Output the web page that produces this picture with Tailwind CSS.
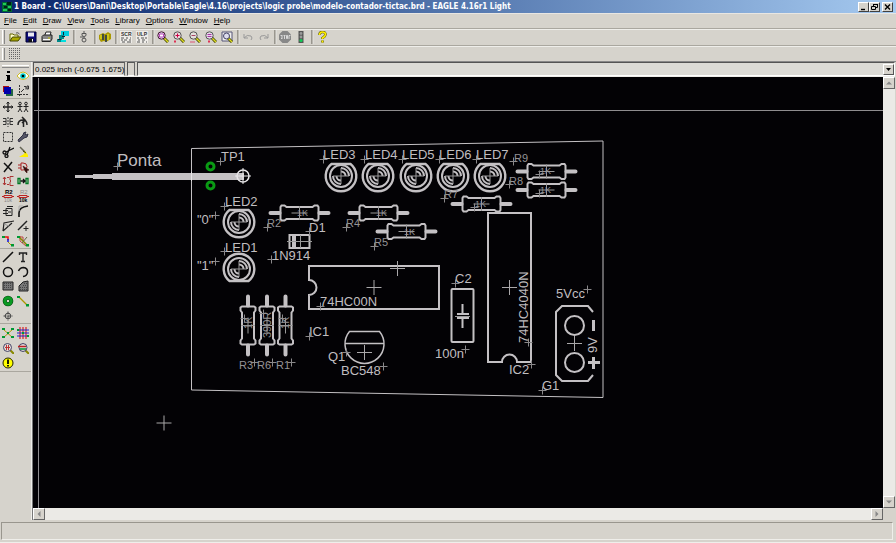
<!DOCTYPE html>
<html lang="en">
<head>
<meta charset="utf-8">
<meta name="viewport" content="width=device-width, initial-scale=1">
<title>1 Board - EAGLE 4.16r1 Light</title>
<script src="https://cdn.jsdelivr.net/npm/@tailwindcss/browser@4"></script>
</head>
<body class="h-screen flex flex-col overflow-hidden bg-[#d6d3cc] text-black text-[8px] leading-[10px] font-['Liberation_Sans',Arial,sans-serif]">

<header class="h-[13px] shrink-0 flex items-center gap-[2px] pl-0.5 pr-[3px] bg-linear-to-r from-[#0a246a] to-[#a6caf0]">
  <svg class="size-[10px] shrink-0" viewBox="0 0 10 10" shape-rendering="crispEdges"><path fill="#063" d="M0 0h10v10H0z"/><path fill="#2c5" d="M1 1h3v2H1zM6 4h3v2H6zM1 7h4v2H1z"/><path fill="#021" d="M5 0h4v3H5zM2 4h3v2H2zM6 7h3v2H6z"/></svg>
  <h1 class="grow truncate text-white font-bold text-[8px] leading-[13px] font-['DejaVu_Sans_Condensed','DejaVu_Sans',sans-serif]">1 Board - C:\Users\Dani\Desktop\Portable\Eagle\4.16\projects\logic probe\modelo-contador-tictac.brd - EAGLE 4.16r1 Light</h1>
  <div class="flex [&>button]:h-[10px] [&>button]:w-[11px] [&>button]:bg-[#d6d3cc] [&>button]:border [&>button]:border-t-white [&>button]:border-l-white [&>button]:border-b-[#404040] [&>button]:border-r-[#404040]">
    <button aria-label="Minimize"><svg class="size-full" viewBox="0 0 9 8"><path d="M2 6.500h4" stroke="#000" stroke-width="1.400"/></svg></button>
    <button aria-label="Restore"><svg class="size-full" viewBox="0 0 9 8" fill="none" stroke="#000"><path d="M3.500 3V1.500h4v3H6M3 1.500h5M1.500 3.500h4v3h-4z"/></svg></button>
    <button aria-label="Close" class="ml-[2px]"><svg class="size-full" viewBox="0 0 9 8"><path d="M2 1.500l5 5M7 1.500l-5 5" stroke="#000" stroke-width="1.400"/></svg></button>
  </div>
</header>

<nav class="h-[15px] shrink-0 flex items-center gap-[6px] pl-1 border-t border-[#e8e6e2]">
  <button><u>F</u>ile</button><button><u>E</u>dit</button><button><u>D</u>raw</button><button><u>V</u>iew</button><button><u>T</u>ools</button><button><u>L</u>ibrary</button><button><u>O</u>ptions</button><button><u>W</u>indow</button><button><u>H</u>elp</button>
</nav>

<div role="toolbar" aria-label="Actions" class="h-[17px] shrink-0 flex items-center border-t border-[#aaa79f] shadow-[inset_0_1px_0_#efeeea] [&>button]:w-4 [&>button]:h-4 [&>button]:flex [&>button]:items-center [&>button]:justify-center [&_svg]:size-3 [&>i]:w-[5px] [&>i]:h-[14px] [&>i]:shrink-0 [&>i]:bg-linear-to-r [&>i]:from-transparent [&>i]:from-40% [&>i]:via-[#99968e] [&>i]:via-50% [&>i]:to-[#efeeea]">
  <span class="ml-[2px] mr-[2px] w-[3px] h-[14px] border-l border-r border-l-white border-r-[#888]"></span>
  <button aria-label="Open"><svg viewBox="0 0 12 12"><path d="M1 10V3h3l1 1h4v2" fill="#ffc" stroke="#660"/><path d="M1 10l2.500-4H12l-3 4z" fill="#aa0" stroke="#440"/><path d="M7 2q2-1 3.500 1" fill="none" stroke="#333" stroke-width=".8"/></svg></button>
  <button aria-label="Save"><svg viewBox="0 0 12 12"><path d="M1 1h10v10H1z" fill="#0a0a7a" stroke="#003"/><path d="M3 1.500h6v4H3z" fill="#e8e8f0"/><path d="M3.500 7.500h5V11h-5z" fill="#111"/><path d="M7 8h1v2.500H7z" fill="#fff"/></svg></button>
  <button aria-label="Print"><svg viewBox="0 0 12 12"><path d="M3.500 5l1.500-4h5L9 5z" fill="#fff" stroke="#222"/><path d="M1 5.500L2.500 4H11v4L9.500 10.500H1z" fill="#888" stroke="#222"/><path d="M2 8.500h7" stroke="#fff"/><path d="M7 7h2" stroke="#cc0"/></svg></button>
  <button aria-label="CAM"><svg viewBox="0 0 12 12"><path d="M4 0h8v5H4z" fill="#0cd"/><path d="M2 4h5v4H5v3H0V8h2z" fill="#088"/><path d="M5 5h3v1H5zM1 8h3v1H1zM6 1h1v3H6z" fill="#123"/><path d="M4 9h5v2H4z" fill="#0dd"/></svg></button>
  <i></i>
  <button aria-label="Switch to schematic"><svg viewBox="0 0 12 12" fill="none" stroke="#555"><path d="M6 0v2M4 4V2.500h4V4q0 1.500-2 1.500T4 4zM2 6h3M6 6v2"/><circle cx="6" cy="9" r="2"/></svg></button>
  <i></i>
  <button aria-label="Library use"><svg viewBox="0 0 12 12"><path d="M0 4l4-2 2 1 3-2 3 2v5l-5 3-2-1-3 1-2-3z" fill="#a90"/><path d="M4 3v6M7 4v7" stroke="#235" stroke-width="1.500"/><path d="M2 4v4M9 3v6" stroke="#ee3"/></svg></button>
  <i></i>
  <button aria-label="Script"><svg viewBox="0 0 12 12"><path d="M0 0h12v12H0z" fill="#eeece8"/><text x="1" y="5" font-size="5" font-weight="bold" fill="#333">SCR</text><path d="M1 7h3M6 7h2M10 7h1M1 9h2M4 9h3M9 9h2M2 11h3M7 11h4" stroke="#555"/></svg></button>
  <button aria-label="ULP"><svg viewBox="0 0 12 12"><path d="M0 0h12v12H0z" fill="#eeece8"/><text x="1" y="5" font-size="5" font-weight="bold" fill="#333">ULP</text><path d="M1 7h2M5 7h3M9 7h2M2 9h2M6 9h3M1 11h3M6 11h2M10 11h1" stroke="#555"/></svg></button>
  <i></i>
  <button aria-label="Zoom fit"><svg viewBox="0 0 12 12"><path d="M7 7l4 4" stroke="#440" stroke-width="3"/><path d="M7 7l4 4" stroke="#dd2" stroke-width="1.500"/><circle cx="4.500" cy="4.500" r="3.700" fill="#dcd8e8" stroke="#413"/><path d="M2.500 3h4v3h-4z" fill="#fff" stroke="#b4b"/></svg></button>
  <button aria-label="Zoom in"><svg viewBox="0 0 12 12"><path d="M7 7l4 4" stroke="#440" stroke-width="3"/><path d="M7 7l4 4" stroke="#dd2" stroke-width="1.500"/><circle cx="4.500" cy="4.500" r="3.700" fill="#e8d8dc" stroke="#555"/><path d="M2.500 4.500h4M4.500 2.500v4" stroke="#c04"/><path d="M1 10.500h2" stroke="#d35" stroke-width="2"/></svg></button>
  <button aria-label="Zoom out"><svg viewBox="0 0 12 12"><path d="M7 7l4 4" stroke="#440" stroke-width="3"/><path d="M7 7l4 4" stroke="#dd2" stroke-width="1.500"/><circle cx="4.500" cy="4.500" r="3.700" fill="#e4e0dc" stroke="#555"/><path d="M2.500 4.500h4" stroke="#a46"/><path d="M1 11h5" stroke="#d57"/></svg></button>
  <button aria-label="Redraw"><svg viewBox="0 0 12 12"><path d="M7 7l4 4" stroke="#440" stroke-width="3"/><path d="M7 7l4 4" stroke="#dd2" stroke-width="1.500"/><circle cx="4.500" cy="4.500" r="3.700" fill="#e4dce8" stroke="#555"/><path d="M2.500 3.500h4M2.500 5.500h4" stroke="#a3a"/><path d="M3 10.500h2" stroke="#d35" stroke-width="2"/></svg></button>
  <button aria-label="Zoom select"><svg viewBox="0 0 12 12"><path d="M1 1h10v9H1z" fill="#eee" stroke="#557"/><path d="M7 7l4 4" stroke="#440" stroke-width="3"/><path d="M7 7l4 4" stroke="#dd2" stroke-width="1.500"/><circle cx="5.500" cy="5" r="3" fill="#dde" stroke="#446"/></svg></button>
  <i></i>
  <button aria-label="Undo"><svg viewBox="0 0 12 12" fill="none" stroke="#999"><path d="M2 3v4h4M2 7q3-4 7-2 2 2 0 4"/></svg></button>
  <button aria-label="Redo"><svg viewBox="0 0 12 12" fill="none" stroke="#999"><path d="M10 3v4H6M10 7Q7 3 3 5q-2 2 0 4"/></svg></button>
  <i></i>
  <button aria-label="Stop"><svg viewBox="0 0 12 12"><path d="M3.500 0h5L12 3.500v5L8.500 12h-5L0 8.500v-5z" fill="#888"/><path d="M1.500 4.500h2M2 7.500h1.500M3 5v2M4.500 4.500h2M5.500 5v3M7.500 4.500v3h1v-3zM10 8V4.500h1.500" stroke="#eee" stroke-width=".8" fill="none"/></svg></button>
  <button aria-label="Go"><svg viewBox="0 0 12 12"><path d="M3.500 0h5v12h-5z" fill="#555"/><circle cx="6" cy="2.500" r="1.400" fill="#999"/><circle cx="6" cy="6" r="1.400" fill="#999"/><circle cx="6" cy="9.500" r="1.600" fill="#1c5"/></svg></button>
  <i></i>
  <button aria-label="Help"><svg viewBox="0 0 12 12" fill="none"><path d="M3.500 4q0-3 3-3t3 2.500Q9.500 5 6.500 7v1M6.500 9.500v2" stroke="#550" stroke-width="2.600"/><path d="M3.500 4q0-3 3-3t3 2.500Q9.500 5 6.500 7v1M6.500 9.500v2" stroke="#fe0" stroke-width="1.600"/></svg></button>
</div>

<div role="toolbar" aria-label="Parameters" class="h-4 shrink-0 flex items-center border-t border-[#aaa79f] shadow-[inset_0_1px_0_#efeeea]">
  <span class="ml-[2px] mr-[4px] w-[3px] h-[12px] border-l border-r border-l-white border-r-[#888]"></span>
  <button aria-label="Grid"><svg class="size-[11px]" viewBox="0 0 11 11"><path d="M.5 0v11M2.500 0v11M4.500 0v11M6.500 0v11M8.500 0v11M10.500 0v11" stroke="#666" stroke-dasharray="1 1"/></svg></button>
</div>

<div class="flex grow min-h-0 border-t border-[#888]">
  <aside aria-label="Commands" class="w-[32px] shrink-0 flex flex-col pt-[3px] border-r border-[#efeeea] [&>div]:grid [&>div]:grid-cols-2 [&>div]:shrink-0 [&>div]:mb-px [&>div]:border-b [&>div]:border-[#aaa79f] [&_button]:flex [&_button]:items-center [&_button]:justify-center [&_button]:min-h-0 [&_svg]:size-3">
    <span class="mx-[2px] h-[3px] shrink-0 border-t border-b border-t-white border-b-[#888]"></span>
    <div class="h-[31px] grid-rows-2">
      <button aria-label="Info"><svg viewBox="0 0 12 12"><path d="M5 1h3v2H5zM4 5h4v5h1v1H4v-1h1V6H4z"/></svg></button>
      <button aria-label="Show"><svg viewBox="0 0 12 12"><path d="M0 6q6-8 12 0-6 7-12 0z" fill="#fff" stroke="#cb2"/><circle cx="6" cy="6" r="2.800" fill="#0cc"/><circle cx="6" cy="6" r="1.300"/></svg></button>
      <button aria-label="Display layers"><svg viewBox="0 0 12 12"><path d="M1 1h6v6H1z" fill="#a11"/><path d="M4 4h7v7H4z" fill="#264"/><path d="M2 2h7v7H2z" fill="#00a"/></svg></button>
      <button aria-label="Mark"><svg viewBox="0 0 12 12" fill="none" stroke="#333"><path d="M2.500 0v12M0 9.500h12" stroke-dasharray="2 1"/><path d="M4 7l3-3M7 1.500h2v3M10 1h1.500v3H10z"/></svg></button>
    </div>
    <div class="h-[149px] grid-rows-10">
      <button aria-label="Move"><svg viewBox="0 0 12 12" fill="none" stroke="#222"><path d="M6 1v10M1 6h10" stroke-width="1.300"/><path d="M4.500 2.500L6 1l1.500 1.500M4.500 9.500L6 11l1.500-1.500M2.500 4.500L1 6l1.500 1.500M9.500 4.500L11 6 9.500 7.500"/></svg></button>
      <button aria-label="Copy"><svg viewBox="0 0 12 12" fill="none" stroke="#222"><circle cx="3" cy="2.500" r="1.300"/><circle cx="9" cy="2.500" r="1.300"/><path d="M.5 5.500h5M6.500 5.500h5M3 4v4M9 4v4M1 11l2-3 2 3M7 11l2-3 2 3"/></svg></button>
      <button aria-label="Mirror"><svg viewBox="0 0 12 12" fill="none" stroke="#333"><path d="M6 1v10" stroke-dasharray="2 1"/><path d="M1 2.500h3v6H1M1 5.500h3M11 2.500H8v6h3M8 5.500h3"/></svg></button>
      <button aria-label="Rotate"><svg viewBox="0 0 12 12" fill="none" stroke="#222" stroke-width="1.500"><path d="M6.500 4v7M1 9q0-5 5-5 4 0 4 5M5 1l3 3-3 3"/></svg></button>
      <button aria-label="Group"><svg viewBox="0 0 12 12"><path d="M1.500 1.500h9v9h-9z" fill="none" stroke="#333" stroke-dasharray="2 1"/></svg></button>
      <button aria-label="Change"><svg viewBox="0 0 12 12"><path d="M1 9l5-5q0-3 3-3L8 3l1 1 2-1q0 4-4 4l-5 4z" fill="#556" stroke="#334"/></svg></button>
      <button aria-label="Cut"><svg viewBox="0 0 12 12" fill="none" stroke="#111" stroke-width="1.300"><path d="M12 2L4 6M8 1L5 9"/><circle cx="2.500" cy="6.500" r="1.500"/><circle cx="4.500" cy="10" r="1.500"/></svg></button>
      <button aria-label="Paste"><svg viewBox="0 0 12 12"><path d="M3 1l5 5" stroke="#665" stroke-width="1.500"/><path d="M8 5l3 4v2H2l5-3z" fill="#fe0"/><path d="M6 5l3 2" stroke="#440"/></svg></button>
      <button aria-label="Delete"><svg viewBox="0 0 12 12"><path d="M2 2l8 8M10 1L2 11" stroke="#111" stroke-width="1.500"/></svg></button>
      <button aria-label="Add"><svg viewBox="0 0 12 12" fill="none" stroke="#a22"><path d="M1 4h3M1 7h3M4 2v7h2q4 0 4-3.500T6 2z"/><path d="M6 5l6 4-2 .5V12L8 10z" fill="#311" stroke="#411" stroke-width=".6"/></svg></button>
      <button aria-label="Pinswap"><svg viewBox="0 0 12 12" fill="none" stroke="#a33"><path d="M2.500 2v8M1 4l1.500-2L4 4M1 8l1.500 2L4 8"/><path d="M5 2.500h2M5 9.500h2M11.500 1.500H8v3.500q2 1 0 2v3.500h3.500"/></svg></button>
      <button aria-label="Replace"><svg viewBox="0 0 12 12" fill="none" stroke="#072" stroke-width="1.300"><path d="M1 3.500h2v5H1zM9 3.500h2v5H9z"/><path d="M3.500 6h5M6 4l2 2-2 2" stroke="#111"/></svg></button>
      <button aria-label="Name"><svg viewBox="0 0 12 12"><text x="3" y="4" font-size="6" font-weight="bold">R2</text><path d="M0 6.500h2M10 6.500h2M2 5.500h8v2H2z" fill="none" stroke="#b22"/><text x="2" y="12" font-size="5" fill="#888">10k</text></svg></button>
      <button aria-label="Value"><svg viewBox="0 0 12 12"><text x="3" y="4" font-size="6" fill="#888">R2</text><path d="M0 6.500h2M10 6.500h2M2 5.500h8v2H2z" fill="none" stroke="#b22"/><text x="2" y="12" font-size="5" font-weight="bold">10k</text></svg></button>
      <button aria-label="Smash"><svg viewBox="0 0 12 12" fill="none" stroke="#222"><path d="M4 3.500h6v7H4zM5 1.500h6M1 5.500h5M1 8.500h5M6 7h3"/></svg></button>
      <button aria-label="Miter"><svg viewBox="0 0 12 12" fill="none"><path d="M2 12V8q0-6 9-7" stroke="#111" stroke-width="1.600"/><path d="M2 6V1h4" stroke="#aaa"/></svg></button>
      <button aria-label="Split"><svg viewBox="0 0 12 12" fill="none" stroke="#222"><path d="M1 11L2 3 12 1M1 11L10 3" stroke-width="1.200"/><path d="M2 4l5 2" stroke="#999"/></svg></button>
      <button aria-label="Optimize"><svg viewBox="0 0 12 12" fill="none" stroke="#222"><path d="M1 10l9-9" stroke-width="1.500"/><path d="M6.500 8.500h5M9 6v5"/></svg></button>
      <button aria-label="Route"><svg viewBox="0 0 12 12" fill="none"><path d="M2 2h4v3" stroke="#e11" stroke-width="1.500"/><path d="M6 4v3" stroke="#11d" stroke-width="1.500"/><path d="M6 7l4 4" stroke="#a90"/><path d="M0 1h3v2H0zM9 9h3v2.500H9z" fill="#093"/></svg></button>
      <button aria-label="Ripup"><svg viewBox="0 0 12 12" fill="none"><path d="M1 2h5v4M3 1v5l6 5" stroke="#b44"/><path d="M2 2l8 8" stroke="#880" stroke-width="1.600"/><path d="M5 8l5-6" stroke="#664"/><path d="M0 1h3v2H0zM9 9h3v2.500H9z" fill="#093"/></svg></button>
    </div>
    <div class="h-[74px] grid-rows-5">
      <button aria-label="Wire"><svg viewBox="0 0 12 12"><path d="M1 11L11 1" stroke="#111" stroke-width="1.500"/></svg></button>
      <button aria-label="Text"><svg viewBox="0 0 12 12"><path d="M2.500 4V2h7v2M6 2v8.500M4 10.500h4" fill="none" stroke="#222" stroke-width="1.400"/></svg></button>
      <button aria-label="Circle"><svg viewBox="0 0 12 12"><circle cx="6" cy="6" r="4.500" fill="none" stroke="#111" stroke-width="1.500"/></svg></button>
      <button aria-label="Arc"><svg viewBox="0 0 12 12"><path d="M1.500 5Q3 1.500 6.500 1.500 11 2 10.500 6.500 10 10 6 10.500" fill="none" stroke="#111" stroke-width="1.500"/></svg></button>
      <button aria-label="Rectangle"><svg viewBox="0 0 12 12"><path d="M1 2h10v8H1z" fill="#777" stroke="#222"/><path d="M2 3.500h8M2 5.500h8M2 7.500h8" stroke="#444" stroke-dasharray="1 1"/></svg></button>
      <button aria-label="Polygon"><svg viewBox="0 0 12 12"><path d="M2 11V6l4-4 5-1v10z" fill="#777" stroke="#222"/><path d="M3 7.500h7M3 9.500h7M6 5.500h4M7 3.500h3" stroke="#444" stroke-dasharray="1 1"/></svg></button>
      <button aria-label="Via"><svg viewBox="0 0 12 12"><circle cx="6" cy="6" r="3.300" fill="#d6d3cc" stroke="#093d12" stroke-width="4"/><circle cx="6" cy="6" r="3.300" fill="none" stroke="#0a9a22" stroke-width="3"/></svg></button>
      <button aria-label="Signal"><svg viewBox="0 0 12 12"><path d="M2 2l8 8" stroke="#a90" stroke-width="1.300"/><path d="M0 1h3v2H0zM9 9h3v2.500H9z" fill="#093"/></svg></button>
      <button aria-label="Hole"><svg viewBox="0 0 12 12" fill="none" stroke="#444"><circle cx="6" cy="6" r="2.800"/><path d="M6 1.500v9M1.500 6h9" stroke-dasharray="3 1"/></svg></button>
    </div>
    <div class="h-[47px] grid-rows-3">
      <button aria-label="Ratsnest"><svg viewBox="0 0 12 12"><path d="M1 2l10 9M11 2L1 11" stroke="#a90"/><path d="M0 1h3v2H0zM9 1h3v2H9zM0 9h3v2H0zM9 9h3v2H9zM5 5h2v2H5z" fill="#093"/></svg></button>
      <button aria-label="Auto"><svg viewBox="0 0 12 12"><path d="M3 0v12M6 0v12M9 0v12" stroke="#d22" stroke-width="1.200"/><path d="M0 3h12M0 6h12M0 9h12" stroke="#22c" stroke-width="1.200"/><path d="M0 2h2v2H0zM5 5h2v2H5zM10 8h2v2h-2z" fill="#093"/></svg></button>
      <button aria-label="ERC"><svg viewBox="0 0 12 12"><path d="M8 8l4 4" stroke="#880" stroke-width="2"/><circle cx="5.500" cy="5.500" r="4" fill="#e4dcdc" stroke="#446"/><path d="M3 5.500h5M4.500 3v5M6.500 3v5" stroke="#b33"/></svg></button>
      <button aria-label="DRC"><svg viewBox="0 0 12 12"><path d="M8 8l4 4" stroke="#880" stroke-width="2"/><circle cx="6" cy="5.500" r="4" fill="#e4dcdc" stroke="#446"/><path d="M1 4.500h8" stroke="#b22" stroke-width="1.500"/><path d="M3 7h6" stroke="#093" stroke-width="1.500"/></svg></button>
      <button aria-label="Errors"><svg viewBox="0 0 12 12"><circle cx="6" cy="6" r="5" fill="#ff0" stroke="#220"/><path d="M6 2.500v4.500M6 8v1.500" stroke="#000" stroke-width="1.800"/></svg></button>
    </div>
  </aside>

  <main class="grow min-w-0 flex flex-col pr-px">
    <div class="h-[15px] shrink-0 flex gap-[2px] pl-px border-b border-[#efeeea]">
      <output class="w-[92px] pl-px leading-[13px] whitespace-nowrap border border-t-[#555] border-l-[#555] border-b-white border-r-[#666]">0.025 inch (-0.675 1.675)</output>
      <span class="w-[8px] border border-t-[#555] border-l-[#555] border-b-white border-r-[#666]"></span>
      <div class="grow flex items-center border border-t-[#555] border-l-[#555] border-b-white border-r-white bg-[#dcdbd6]">
        <input aria-label="Command line" class="grow h-full px-1 bg-transparent outline-none">
        <button aria-label="Command history" class="w-[11px] h-[11px] bg-[#d6d3cc] border border-t-white border-l-white border-b-[#555] border-r-[#555]"><svg class="size-full" viewBox="0 0 9 9"><path d="M2 3h5L4.500 6z"/></svg></button>
      </div>
    </div>

    <div class="grow min-h-0 grid grid-cols-[1fr_12px] grid-rows-[1fr_12px] border-l border-[#777]">
      <svg role="img" aria-label="Board layout" class="block w-full h-full bg-[#030205] font-['Liberation_Sans',Arial,sans-serif]">
        <defs>
          <g id="led"><path d="M-9.500-12H9.500A15.300 15.300 0 1 1-9.500-12z" stroke-width="2.400"/><use href="#lens"/></g>
          <g id="lens"><circle r="11" stroke-width="2"/><path d="M0-8A8 8 0 0 1 8 0M0-4.500A4.500 4.500 0 0 1 4.500 0M0 8A8 8 0 0 1-8 0M0 4.500A4.500 4.500 0 0 1-4.500 0" stroke-width="2"/><path d="M-8 0H8M0-8V8" stroke="#9a989a" stroke-width="1"/></g>
          <g id="res"><path d="M-29 0h9M20 0h9" stroke-width="4" stroke-linecap="round"/><path d="M-18-7.500h3l2 1.500h26l2-1.500h3l1 1.500V6l-1 1.500h-3L13 6h-26l-2 1.500h-3L-19 6V-6z" stroke-width="2"/><path d="M0-7V7M-8 0H8" stroke="#999"/></g>
          <path id="x" d="M-4 0H4M0-4V4" stroke="#8a888a"/>
          <path id="o" d="M-7.500 0H7.500M0-7.500V7.500" stroke="#aaa8aa"/>
        </defs>
        <g transform="translate(-33 -77)" fill="none" stroke="#c4c1c4">
          <path d="M34 110.500H2000M38.500 78V2000" stroke="#8f8d8f"/>
          <path d="M191.500 148.500L603 141V397.500L191.500 390z"/>
          <path d="M75 176.500h20" stroke-width="3"/><path d="M93 176.500h20" stroke-width="5"/><path d="M112 176.500h132" stroke-width="7"/>
          <g stroke="#e8e6e8"><circle cx="243" cy="176" r="6" stroke-width="1.500"/><path d="M235 176h16M243 168v16M191.500 172v9"/></g>
          <g stroke="#0a9a14" stroke-width="3"><circle cx="210.500" cy="166.500" r="3.500"/><circle cx="210.500" cy="185.500" r="3.500"/></g>

          <use href="#led" x="341" y="176"/><use href="#led" x="378" y="176"/><use href="#led" x="416" y="176"/><use href="#led" x="453" y="176"/><use href="#led" x="490" y="176"/><use href="#led" x="239" y="222"/>
          <path d="M229.500 281H248.500A15.300 15.300 0 1 0 229.500 281z" stroke-width="2.400"/><use href="#lens" x="239" y="269"/>

          <use href="#res" x="299.500" y="213"/><use href="#res" x="378.500" y="213"/><use href="#res" x="406.500" y="231.500"/><use href="#res" x="481.500" y="204"/><use href="#res" x="546.500" y="171.500"/><use href="#res" x="546.500" y="190"/>
          <use href="#res" transform="translate(248 325.500) rotate(90)"/><use href="#res" transform="translate(267 325.500) rotate(90)"/><use href="#res" transform="translate(285.500 325.500) rotate(90)"/>

          <g stroke-width="2">
            <path d="M309 266H439V309H309V295A7.500 7.500 0 0 0 309 280z"/>
            <path d="M488 213H531V362H517A7.500 7.500 0 0 0 502 362H488z"/>
            <rect x="451.500" y="289" width="22" height="53" rx="1"/>
            <path d="M457 314h12M457 318h12M462.500 304v10M462.500 318v10"/>
            <path d="M593 312l-5-6h-26l-6 6v63l6 6h26l5-6"/>
            <circle cx="574.500" cy="325.500" r="9.500"/><circle cx="574.500" cy="362.500" r="9.500"/>
            <path d="M593.500 320v11M588 362.500h12M593.500 357v12" stroke-width="3"/>
            <path d="M289.500 235h20v13h-20z"/><path d="M294 235v13" stroke-width="4"/>
            <path d="M349.500 331.500h30A19.500 19.500 0 1 1 349.500 331.500z" stroke-width="1.500"/><path d="M345 343.500h39" stroke-width="1.500"/>
          </g>
          <path d="M300.500 235v13M287 241.500h25M455 316.500h15" stroke="#999"/>

          <use href="#o" x="374" y="287.500"/><use href="#o" x="397.500" y="268.500"/><use href="#o" x="364.500" y="352.500"/><use href="#o" x="509.500" y="287.500"/><use href="#o" x="574.500" y="343.500"/><use href="#o" x="164" y="423"/>

          <use href="#x" x="117.500" y="166.500"/><use href="#x" x="220.500" y="161.500"/><use href="#x" x="224.500" y="206.500"/><use href="#x" x="224.500" y="251.500"/><use href="#x" x="215.500" y="215.500"/><use href="#x" x="215.500" y="261.500"/>
          <use href="#x" x="323.500" y="159.500"/><use href="#x" x="364.500" y="159.500"/><use href="#x" x="402.500" y="159.500"/><use href="#x" x="439.500" y="159.500"/><use href="#x" x="476.500" y="159.500"/>
          <use href="#x" x="513.500" y="161.500"/><use href="#x" x="509.500" y="184.500"/><use href="#x" x="444.500" y="198.500"/><use href="#x" x="267.500" y="227.500"/><use href="#x" x="346.500" y="227.500"/><use href="#x" x="374.500" y="246.500"/>
          <use href="#x" x="309.500" y="231.500"/><use href="#x" x="271.500" y="259.500"/><use href="#x" x="320.500" y="306.500"/><use href="#x" x="309.500" y="336.500"/><use href="#x" x="346.500" y="352.500"/><use href="#x" x="383.500" y="366.500"/>
          <use href="#x" x="254.500" y="362.500"/><use href="#x" x="272.500" y="362.500"/><use href="#x" x="291.500" y="362.500"/><use href="#x" x="455.500" y="283.500"/><use href="#x" x="465.500" y="349.500"/><use href="#x" x="528.500" y="342.500"/>
          <use href="#x" x="531.500" y="364.500"/><use href="#x" x="542.500" y="390.500"/><use href="#x" x="587.500" y="289.500"/>
          <use href="#x" x="474.500" y="207.500"/><use href="#x" x="539.500" y="174.500"/><use href="#x" x="539.500" y="193.500"/><use href="#x" x="244.500" y="318.500"/><use href="#x" x="263.500" y="313.500"/><use href="#x" x="282.500" y="318.500"/>

          <g fill="#c0bec0" stroke="none" font-size="13">
            <text x="117" y="166" font-size="17">Ponta</text>
            <text x="221" y="161">TP1</text>
            <text x="225" y="206">LED2</text><text x="225" y="252">LED1</text>
            <text x="197" y="224">"0"</text><text x="197" y="270">"1"</text>
            <text x="323" y="159">LED3</text><text x="365" y="159">LED4</text><text x="402" y="159">LED5</text><text x="439" y="159">LED6</text><text x="476" y="159">LED7</text>
            <text x="309" y="232">D1</text><text x="272" y="260">1N914</text>
            <text x="320" y="306">74HC00N</text><text x="309" y="336">IC1</text>
            <text x="328" y="361">Q1</text><text x="341" y="375">BC548</text>
            <text x="455" y="283">C2</text><text x="435" y="358">100n</text>
            <text x="509" y="374">IC2</text><text x="542" y="390">G1</text><text x="556" y="298">5Vcc</text>
            <text transform="translate(528 343) rotate(-90)">74HC4040N</text>
            <text transform="translate(597 353) rotate(-90)">9V</text>
          </g>
          <g fill="#959395" stroke="none" font-size="11">
            <text x="267" y="227">R2</text><text x="346" y="227">R4</text><text x="374" y="246">R5</text><text x="444" y="198">R7</text><text x="514" y="162">R9</text><text x="509" y="185">R8</text>
            <text x="239" y="369">R3</text><text x="257" y="369">R6</text><text x="276" y="369">R1</text>
            <text x="297" y="216" font-size="9">1K</text><text x="376" y="216" font-size="9">1K</text><text x="404" y="235" font-size="9">1K</text>
            <text x="475" y="207" font-size="9">1K</text><text x="540" y="174" font-size="9">1K</text><text x="540" y="193" font-size="9">1K</text>
            <text transform="translate(252 329) rotate(-90)" font-size="10">1K</text><text transform="translate(271 338) rotate(-90)" font-size="11">390R</text><text transform="translate(289 329) rotate(-90)" font-size="10">1K</text>
          </g>
        </g>
      </svg>
      <div class="flex flex-col justify-between bg-[#ebeae6] [&>button]:h-[12px] [&>button]:bg-[#d6d3cc] [&>button]:border [&>button]:border-t-white [&>button]:border-l-white [&>button]:border-b-[#666] [&>button]:border-r-[#666]">
        <button aria-label="Scroll up"><svg class="size-full" viewBox="0 0 10 10"><path d="M2 6.500h6L5 3.500z" fill="#888"/></svg></button>
        <button aria-label="Scroll down"><svg class="size-full" viewBox="0 0 10 10"><path d="M2 3.500h6L5 6.500z" fill="#888"/></svg></button>
      </div>
      <div class="flex justify-between bg-[#ebeae6] [&>button]:w-[12px] [&>button]:bg-[#d6d3cc] [&>button]:border [&>button]:border-t-white [&>button]:border-l-white [&>button]:border-b-[#666] [&>button]:border-r-[#666]">
        <button aria-label="Scroll left"><svg class="size-full" viewBox="0 0 10 10"><path d="M6.500 2v6l-3-3z" fill="#888"/></svg></button>
        <button aria-label="Scroll right"><svg class="size-full" viewBox="0 0 10 10"><path d="M3.500 2v6l3-3z" fill="#888"/></svg></button>
      </div>
      <div></div>
    </div>
  </main>
</div>

<footer class="h-[23px] shrink-0 pt-[2px] pb-[3px] px-px border-b border-[#efeeea]">
  <div role="status" class="h-[18px] mr-[2px] border border-t-[#99968e] border-l-[#99968e] border-b-[#efeeea] border-r-[#efeeea]"></div>
</footer>
</body>
</html>
